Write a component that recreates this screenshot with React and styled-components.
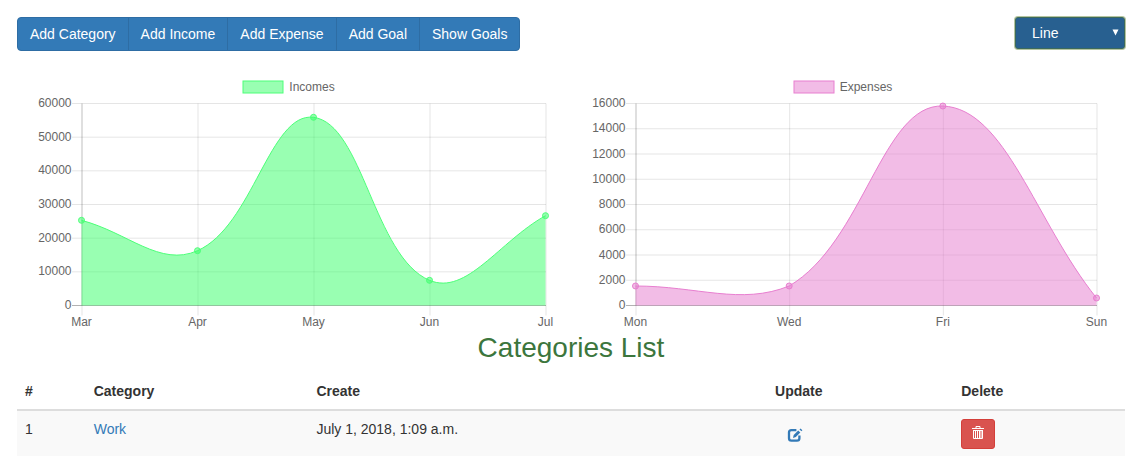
import React, { useLayoutEffect, useRef, useState } from "react";
import styled, { createGlobalStyle } from "styled-components";

const GlobalStyle = createGlobalStyle`
  *, *::before, *::after { box-sizing: border-box; }
  html { overflow-x: hidden; scrollbar-width: none; }
  body {
    margin: 0;
    background: #fff;
    color: #333;
    font-family: "Liberation Sans", Arial, sans-serif;
    font-size: 14px;
    line-height: 20px;
  }
`;

const Page = styled.main`
  padding: 17px 5px 0 17px;
`;

const Toolbar = styled.header`
  display: flex;
  justify-content: space-between;
  align-items: flex-start;
  padding-bottom: 19px;
`;

const ButtonGroup = styled.nav`
  display: flex;
`;

const ToolButton = styled.button`
  padding: 6px 12px;
  border: 1px solid #2e6da4;
  background: #337ab7;
  color: #fff;
  font: inherit;
  cursor: pointer;

  & + & { margin-left: -1px; }
  &:first-child { border-radius: 4px 0 0 4px; }
  &:last-child { border-radius: 0 4px 4px 0; }
`;

const SelectBox = styled.label`
  position: relative;
  display: block;
  width: 110px;
`;

const Select = styled.select`
  display: block;
  appearance: none;
  width: 100%;
  height: 32px;
  padding: 5px 16px;
  border: 1px solid #3d6a5c;
  border-radius: 3px;
  box-shadow: 0 0 0 1px #b5c5a0;
  background: #286090;
  color: #fff;
  font: inherit;
`;

const SelectArrow = styled.svg`
  position: absolute;
  top: 12px;
  right: 6px;
  width: 7px;
  height: 7px;
  fill: #fff;
  pointer-events: none;
`;

const ChartRow = styled.section`
  display: flex;
`;

const ChartColumn = styled.figure`
  flex: 1;
  min-width: 0;
  margin: 0;
  padding: 0 15px;
`;

const Legend = styled.figcaption`
  display: flex;
  justify-content: center;
  align-items: center;
  gap: 5px;
  height: 33px;
  padding-right: 11px;
  color: #666;
  font-size: 12px;
  line-height: 14px;
`;

const Plot = styled.svg`
  display: block;
  width: 100%;
  overflow: visible;

  text {
    fill: #666;
    font-size: 12px;
  }
`;

const Title = styled.h2`
  margin: 0 0 10px;
  color: #3c763d;
  font-size: 28px;
  font-weight: 400;
  line-height: 31px;
  text-align: center;
`;

const Table = styled.table`
  width: 100%;
  table-layout: fixed;
  border-collapse: separate;
  border-spacing: 0;
`;

const Col = styled.col`
  width: ${(p) => p.$width};
`;

const HeadCell = styled.th`
  padding: 8px;
  border-bottom: 2px solid #ddd;
  text-align: left;
`;

const Cell = styled.td`
  padding: 8px;
  background: #f9f9f9;
  vertical-align: top;
`;

const Link = styled.a`
  color: #337ab7;
  text-decoration: none;
`;

const EditLink = styled(Link)`
  display: block;
  width: fit-content;
  padding: 8px 12px;

  svg { display: block; }
`;

const DeleteButton = styled.button`
  display: block;
  width: 34px;
  height: 30px;
  padding: 6px 10px 8px;
  border: 1px solid #d43f3a;
  border-radius: 3px;
  background: #d9534f;
  color: #fff;
  cursor: pointer;

  svg { display: block; }
`;

const INCOMES = {
  label: "Incomes",
  labels: ["Mar", "Apr", "May", "Jun", "Jul"],
  values: [25300, 16280, 55900, 7480, 26680],
  max: 60000,
  step: 10000,
  edge: 11,
  fill: "rgba(51, 255, 102, 0.5)",
  stroke: "#4dff79",
};

const EXPENSES = {
  label: "Expenses",
  labels: ["Mon", "Wed", "Fri", "Sun"],
  values: [1545, 1545, 15800, 594],
  max: 16000,
  step: 2000,
  edge: 14,
  fill: "rgba(230, 122, 206, 0.5)",
  stroke: "#e87fd0",
};

const TENSION = 0.4;

// Cubic spline through the points, handles scaled by neighbour distances
// and kept inside the plot's vertical range.
function splinePath(points, top, bottom) {
  const clamp = (y) => Math.max(top, Math.min(bottom, y));
  const handles = points.map((p, i) => {
    const prev = points[i - 1] || p;
    const next = points[i + 1] || p;
    const before = Math.hypot(p.x - prev.x, p.y - prev.y);
    const after = Math.hypot(next.x - p.x, next.y - p.y);
    const a = (TENSION * before) / (before + after);
    const b = (TENSION * after) / (before + after);
    const dx = next.x - prev.x;
    const dy = next.y - prev.y;
    return {
      inX: p.x - a * dx,
      inY: clamp(p.y - a * dy),
      outX: p.x + b * dx,
      outY: clamp(p.y + b * dy),
    };
  });
  return points
    .map((p, i) => {
      if (i === 0) return `M${p.x},${p.y}`;
      const from = handles[i - 1];
      const to = handles[i];
      return `C${from.outX},${from.outY} ${to.inX},${to.inY} ${p.x},${p.y}`;
    })
    .join(" ");
}

function LineChart({ data }) {
  const ref = useRef(null);
  const [width, setWidth] = useState(524);

  useLayoutEffect(() => {
    const node = ref.current;
    const measure = () => setWidth(node.getBoundingClientRect().width);
    measure();
    const observer = new ResizeObserver(measure);
    observer.observe(node);
    return () => observer.disconnect();
  }, []);

  const height = width / 2 - 33;
  const left = 49.5;
  const right = width - data.edge + 0.5;
  const top = 0.5;
  const bottom = height - 26.5;
  const xAt = (i) => left + ((right - left) * i) / (data.labels.length - 1);
  const yAt = (v) => bottom - ((bottom - top) * v) / data.max;
  const points = data.values.map((v, i) => ({ x: xAt(i), y: yAt(v) }));
  const line = splinePath(points, top, bottom);
  const ticks = [];
  for (let v = 0; v <= data.max; v += data.step) ticks.push(v);

  return (
    <ChartColumn>
      <Legend>
        <svg width="42" height="14" aria-hidden="true">
          <rect x="1" y="1" width="40" height="12" fill={data.fill} stroke={data.stroke} />
        </svg>
        {data.label}
      </Legend>
      <Plot ref={ref} height={height} role="img" aria-label={`${data.label} chart`}>
        {ticks.map((v) => (
          <g key={v}>
            <line
              x1={left - 9.5}
              x2={right + 0.5}
              y1={yAt(v)}
              y2={yAt(v)}
              stroke={v === 0 ? "rgba(0,0,0,0.3)" : "rgba(0,0,0,0.1)"}
            />
            <text x={left - 10} y={yAt(v) + 3.5} textAnchor="end">{v}</text>
          </g>
        ))}
        {data.labels.map((name, i) => (
          <g key={name}>
            <line
              x1={xAt(i) + 0.5}
              x2={xAt(i) + 0.5}
              y1={top}
              y2={bottom}
              stroke={i === 0 ? "rgba(0,0,0,0.25)" : "rgba(0,0,0,0.1)"}
            />
            <line
              x1={xAt(i) + 0.5}
              x2={xAt(i) + 0.5}
              y1={bottom}
              y2={bottom + 10}
              stroke="rgba(0,0,0,0.1)"
            />
            <text x={xAt(i)} y={bottom + 20.5} textAnchor="middle">{name}</text>
          </g>
        ))}
        <path d={`${line} L${right},${bottom} L${left},${bottom} Z`} fill={data.fill} />
        <path d={line} fill="none" stroke={data.stroke} />
        {points.map((p) => (
          <circle key={p.x} cx={p.x} cy={p.y} r="3" fill={data.fill} stroke={data.stroke} />
        ))}
      </Plot>
    </ChartColumn>
  );
}

const EditIcon = () => (
  <svg width="16" height="16" viewBox="0 0 16 16" fill="none" aria-hidden="true">
    <path
      d="M9.4 3.2H4.4Q2 3.2 2 5.6V11.2Q2 13.6 4.4 13.6H10Q12.4 13.6 12.4 11.2V8.6"
      stroke="currentColor"
      strokeWidth="2.3"
    />
    <path d="M6 10.9L6.7 7.9L11.2 3.4L13.3 5.4L8.8 9.9Z" fill="currentColor" />
    <path d="M12.5 2.5L13.5 1.5L15.4 3.3L14.4 4.3Z" fill="currentColor" />
  </svg>
);

const TrashIcon = () => (
  <svg width="12" height="14" viewBox="0 0 12 14" fill="none" stroke="currentColor" aria-hidden="true">
    <path d="M0 2.5H12M4 2V0.5H8V2" />
    <path d="M1.5 4.5H10.5M1.5 4V12.5H10.5V4M3.5 5V12M5.5 5V12M7.5 5V12M9 5V12" />
  </svg>
);

const ACTIONS = ["Add Category", "Add Income", "Add Expense", "Add Goal", "Show Goals"];
const COLUMNS = [
  ["#", "6.2%"],
  ["Category", "20.1%"],
  ["Create", "41.4%"],
  ["Update", "16.8%"],
  ["Delete", "15.5%"],
];

export default function App() {
  return (
    <>
      <GlobalStyle />
      <Page>
        <Toolbar>
          <ButtonGroup>
            {ACTIONS.map((name) => (
              <ToolButton key={name} type="button">{name}</ToolButton>
            ))}
          </ButtonGroup>
          <SelectBox>
            <Select aria-label="Chart type" defaultValue="Line">
              <option>Line</option>
              <option>Bar</option>
            </Select>
            <SelectArrow viewBox="0 0 7 7" aria-hidden="true">
              <path d="M0.5 0.5H6.5L3.5 6.5Z" />
            </SelectArrow>
          </SelectBox>
        </Toolbar>
        <ChartRow>
          <LineChart data={INCOMES} />
          <LineChart data={EXPENSES} />
        </ChartRow>
        <Title>Categories List</Title>
        <Table>
          <colgroup>
            {COLUMNS.map(([name, width]) => (
              <Col key={name} $width={width} />
            ))}
          </colgroup>
          <thead>
            <tr>
              {COLUMNS.map(([name]) => (
                <HeadCell key={name} scope="col">{name}</HeadCell>
              ))}
            </tr>
          </thead>
          <tbody>
            <tr>
              <Cell>1</Cell>
              <Cell><Link href="#work">Work</Link></Cell>
              <Cell>July 1, 2018, 1:09 a.m.</Cell>
              <Cell><EditLink href="#edit" aria-label="Update Work"><EditIcon /></EditLink></Cell>
              <Cell><DeleteButton type="button" aria-label="Delete Work"><TrashIcon /></DeleteButton></Cell>
            </tr>
          </tbody>
        </Table>
      </Page>
    </>
  );
}
